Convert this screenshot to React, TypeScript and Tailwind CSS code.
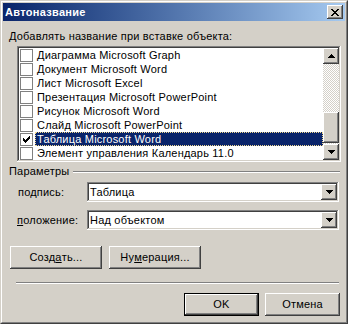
import React from 'react';

const raised =
  'shadow-[inset_-1px_-1px_#404040,inset_1px_1px_#ffffff,inset_-2px_-2px_#808080,inset_2px_2px_#d4d0c8]';
const sunken =
  'shadow-[inset_-1px_-1px_#ffffff,inset_1px_1px_#808080,inset_-2px_-2px_#d4d0c8,inset_2px_2px_#404040]';

const items = [
  'Диаграмма Microsoft Graph',
  'Документ Microsoft Word',
  'Лист Microsoft Excel',
  'Презентация Microsoft PowerPoint',
  'Рисунок Microsoft Word',
  'Слайд Microsoft PowerPoint',
  'Таблица Microsoft Word',
  'Элемент управления Календарь 11.0',
];

function Arrow({ down }: { down?: boolean }) {
  const rows = [1, 3, 5, 7];
  const list = down ? [...rows].reverse() : rows;
  return (
    <svg width="7" height="4" viewBox="0 0 7 4" shapeRendering="crispEdges">
      {list.map((w, i) => (
        <rect key={i} x={(7 - w) / 2} y={i} width={w} height={1} fill="#000" />
      ))}
    </svg>
  );
}

function CheckMark() {
  const tops = [2, 3, 4, 3, 2, 1, 0];
  return (
    <svg width="7" height="7" viewBox="0 0 7 7" shapeRendering="crispEdges">
      {tops.map((t, i) => (
        <rect key={i} x={i} y={t} width={1} height={3} fill="#000" />
      ))}
    </svg>
  );
}

function CloseX() {
  const rows: [number, number][][] = [
    [[0, 2], [6, 2]],
    [[1, 2], [5, 2]],
    [[2, 4]],
    [[3, 2]],
    [[2, 4]],
    [[1, 2], [5, 2]],
    [[0, 2], [6, 2]],
  ];
  return (
    <svg width="8" height="7" viewBox="0 0 8 7" shapeRendering="crispEdges">
      {rows.map((segs, y) =>
        segs.map(([x, w], j) => <rect key={`${y}-${j}`} x={x} y={y} width={w} height={1} fill="#000" />)
      )}
    </svg>
  );
}

function ScrollBtn({ down }: { down?: boolean }) {
  return (
    <div className={`w-[16px] h-[16px] bg-[#d4d0c8] ${raised} flex items-center justify-center`}>
      <Arrow down={down} />
    </div>
  );
}

function Combo({ value }: { value: string }) {
  return (
    <div className={`w-[252px] h-[20px] bg-white ${sunken} flex items-center p-[2px]`}>
      <span className="flex-1 pl-[1px] leading-[13px]">{value}</span>
      <div className={`w-[16px] h-[16px] bg-[#d4d0c8] ${raised} flex items-center justify-center`}>
        <Arrow down />
      </div>
    </div>
  );
}

function Button({ children, w, isDefault }: { children: React.ReactNode; w: string; isDefault?: boolean }) {
  return (
    <div
      className={`${w} h-[23px] bg-[#d4d0c8] flex items-center justify-center ${
        isDefault
          ? 'shadow-[inset_0_0_0_1px_#000000,inset_-2px_-2px_#404040,inset_2px_2px_#ffffff,inset_-3px_-3px_#808080]'
          : raised
      }`}
    >
      {children}
    </div>
  );
}

export default function App() {
  return (
    <div
      className="w-[348px] h-[324px] border border-t-[#d4d0c8] border-l-[#d4d0c8] border-r-[#404040] border-b-[#404040] text-[11px] tracking-[0.2px] text-black select-none"
      style={{ fontFamily: '"Liberation Sans", Arial, sans-serif' }}
    >
      <div className="h-full border border-t-white border-l-white border-r-[#808080] border-b-[#808080] bg-[#d4d0c8] p-[1px] flex flex-col">
        {/* title bar */}
        <div className="h-[18px] bg-gradient-to-r from-[#0a246a] to-[#a6caf0] flex items-center justify-between pl-[2px] pr-[2px]">
          <span className="text-white font-bold text-[11px] leading-[13px] tracking-[0.3px]">Автоназвание</span>
          <div className={`w-[16px] h-[14px] bg-[#d4d0c8] ${raised} flex items-center justify-center`}>
            <CloseX />
          </div>
        </div>

        <div className="flex-1 flex flex-col pl-[6px]">
          <div className="mt-[9px] leading-[13px]">
            <u>Д</u>обавлять название при вставке объекта:
          </div>

          {/* list box */}
          <div className={`mt-[3px] ml-[8px] w-[324px] h-[116px] bg-white ${sunken} p-[2px] flex`}>
            <div className="flex-1 flex flex-col">
              {items.map((it, i) => {
                const sel = i === 6;
                return (
                  <div key={it} className="h-[14px] flex items-center">
                    <div className="ml-[1px] w-[13px] h-[13px] bg-white border border-[#808080] flex items-center justify-center">
                      {sel && <CheckMark />}
                    </div>
                    <div
                      className={`ml-[2px] flex-1 h-[14px] flex items-center pl-[2px] leading-[13px] ${
                        sel ? 'bg-[#0a246a] text-white outline-1 outline-dotted outline-[#f0d890] -outline-offset-1' : ''
                      }`}
                    >
                      {it}
                    </div>
                  </div>
                );
              })}
            </div>
            <div className="w-[16px] flex flex-col">
              <ScrollBtn />
              <div className="flex-1 flex flex-col bg-[image:repeating-conic-gradient(#d4d0c8_0%_25%,#ffffff_0%_50%)] bg-[length:2px_2px]">
                <div className="h-[48px]" />
                <div className={`h-[31px] bg-[#d4d0c8] ${raised}`} />
              </div>
              <ScrollBtn down />
            </div>
          </div>

          {/* params */}
          <div className="mt-[3px] flex items-center">
            <span className="leading-[13px]">Параметры</span>
            <div className="ml-[4px] flex-1 mr-[5px] h-[2px] border-t border-t-[#808080] border-b border-b-white" />
          </div>

          <div className="mt-[4px] ml-[9px] flex items-center">
            <span className="w-[69px] leading-[13px]">
              по<u>д</u>пись:
            </span>
            <Combo value="Таблица" />
          </div>
          <div className="mt-[8px] ml-[8px] flex items-center">
            <span className="w-[70px] leading-[13px]">
              <u>п</u>оложение:
            </span>
            <Combo value="Над объектом" />
          </div>

          <div className="mt-[16px] ml-[1px] flex gap-[7px]">
            <Button w="w-[92px]">
              Созд<u>а</u>ть...
            </Button>
            <Button w="w-[92px]">
              Ну<u>м</u>ерация...
            </Button>
          </div>

          <div className="mt-[13px] ml-[7px] w-[323px] h-[2px] border-t border-t-[#808080] border-b border-b-white" />

          <div className="mt-[9px] flex justify-end gap-[6px] pr-[5px]">
            <Button w="w-[75px]" isDefault>
              OK
            </Button>
            <Button w="w-[75px]">Отмена</Button>
          </div>
        </div>
      </div>
    </div>
  );
}
